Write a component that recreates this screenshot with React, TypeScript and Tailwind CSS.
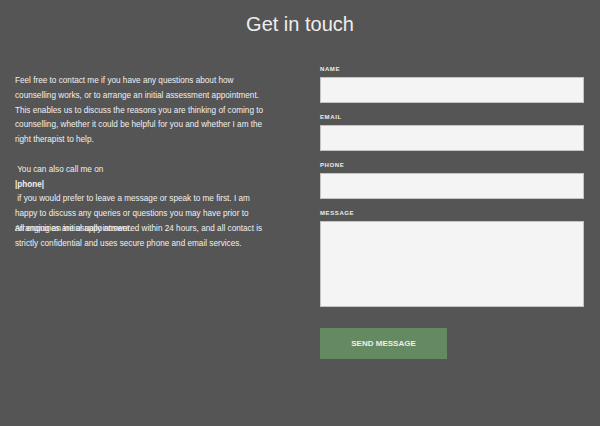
export default function App() {
  const fields = [
    { label: 'Name', type: 'text' },
    { label: 'Email', type: 'email' },
    { label: 'Phone', type: 'tel' },
  ];

  return (
    <div className="min-h-screen bg-[#555555] font-['Liberation_Sans',Arial,sans-serif] text-[#eeeeee]">
      <h1 className="pt-[11px] text-center text-[20px] leading-[26px]">Get in touch</h1>

      <div className="mt-[28px] grid grid-cols-[258px_264px] gap-x-[47px] px-[15px]">
        {/* left column: intro text */}
        <div className="pt-[9px] text-[8.2px] leading-[14.8px] text-[#f0f0f0]">
          <p>
            Feel free to contact me if you have any questions about how counselling works, or to
            arrange an initial assessment appointment. This enables us to discuss the reasons you
            are thinking of coming to counselling, whether it could be helpful for you and whether
            I am the right therapist to help.
            <br />
            <br />
            <span className="whitespace-pre"> You can also call me on</span>
            <br />
            <b>|phone|</b>
            <br />
            <span className="whitespace-pre"> </span>if you would prefer to leave a message or speak
            to me first. I am happy to discuss any queries or questions you may have prior to
            arranging an initial appointment.
          </p>
          <p className="-mt-[14.8px]">
            All enquiries are usually answered within 24 hours, and all contact is strictly
            confidential and uses secure phone and email services.
          </p>
        </div>

        {/* right column: form */}
        <form className="flex flex-col" onSubmit={(e) => e.preventDefault()}>
          {fields.map((f, i) => (
            <label key={f.label} className={i > 0 ? 'mt-[10px] flex flex-col' : 'flex flex-col'}>
              <span className="text-[6px] leading-[8px] font-bold uppercase tracking-[0.6px]">
                {f.label}
              </span>
              <input
                type={f.type}
                className="mt-[4px] h-[26px] w-full border border-[#c4c4c4] bg-[#f4f4f4] outline-none"
              />
            </label>
          ))}
          <label className="mt-[10px] flex flex-col">
            <span className="text-[6px] leading-[8px] font-bold uppercase tracking-[0.6px]">
              Message
            </span>
            <textarea className="mt-[4px] h-[86px] w-full resize-none border border-[#c4c4c4] bg-[#f4f4f4] outline-none" />
          </label>
          <button
            type="submit"
            className="mt-[21px] h-[31px] w-[127px] bg-[#658a62] text-[8px] font-bold uppercase text-[#eeeeee]"
          >
            Send message
          </button>
        </form>
      </div>
    </div>
  );
}
